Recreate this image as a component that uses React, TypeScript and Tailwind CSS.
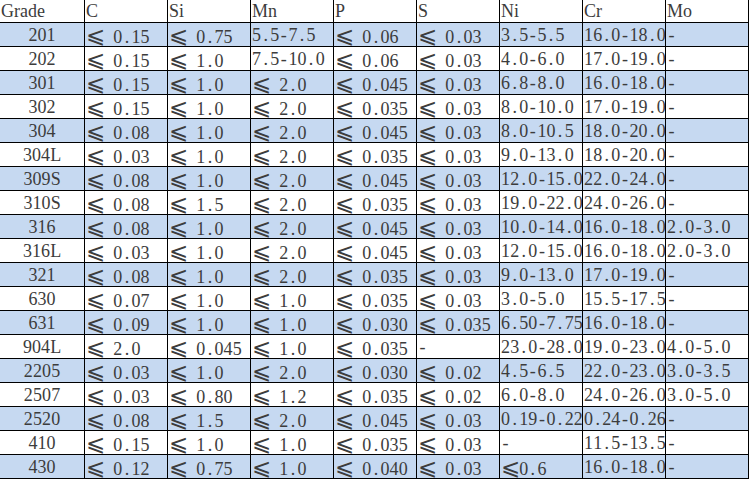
const header = ["Grade", "C", "Si", "Mn", "P", "S", "Ni", "Cr", "Mo"];

const L = "⩽ ";

const rows: string[][] = [
  ["201", L + "0.15", L + "0.75", "5.5-7.5", L + "0.06", L + "0.03", "3.5-5.5", "16.0-18.0", "-"],
  ["202", L + "0.15", L + "1.0", "7.5-10.0", L + "0.06", L + "0.03", "4.0-6.0", "17.0-19.0", "-"],
  ["301", L + "0.15", L + "1.0", L + "2.0", L + "0.045", L + "0.03", "6.8-8.0", "16.0-18.0", "-"],
  ["302", L + "0.15", L + "1.0", L + "2.0", L + "0.035", L + "0.03", "8.0-10.0", "17.0-19.0", "-"],
  ["304", L + "0.08", L + "1.0", L + "2.0", L + "0.045", L + "0.03", "8.0-10.5", "18.0-20.0", "-"],
  ["304L", L + "0.03", L + "1.0", L + "2.0", L + "0.035", L + "0.03", "9.0-13.0", "18.0-20.0", "-"],
  ["309S", L + "0.08", L + "1.0", L + "2.0", L + "0.045", L + "0.03", "12.0-15.0", "22.0-24.0", "-"],
  ["310S", L + "0.08", L + "1.5", L + "2.0", L + "0.035", L + "0.03", "19.0-22.0", "24.0-26.0", "-"],
  ["316", L + "0.08", L + "1.0", L + "2.0", L + "0.045", L + "0.03", "10.0-14.0", "16.0-18.0", "2.0-3.0"],
  ["316L", L + "0.03", L + "1.0", L + "2.0", L + "0.045", L + "0.03", "12.0-15.0", "16.0-18.0", "2.0-3.0"],
  ["321", L + "0.08", L + "1.0", L + "2.0", L + "0.035", L + "0.03", "9.0-13.0", "17.0-19.0", "-"],
  ["630", L + "0.07", L + "1.0", L + "1.0", L + "0.035", L + "0.03", "3.0-5.0", "15.5-17.5", "-"],
  ["631", L + "0.09", L + "1.0", L + "1.0", L + "0.030", L + "0.035", "6.50-7.75", "16.0-18.0", "-"],
  ["904L", L + "2.0", L + "0.045", L + "1.0", L + "0.035", "-", "23.0-28.0", "19.0-23.0", "4.0-5.0"],
  ["2205", L + "0.03", L + "1.0", L + "2.0", L + "0.030", L + "0.02", "4.5-6.5", "22.0-23.0", "3.0-3.5"],
  ["2507", L + "0.03", L + "0.80", L + "1.2", L + "0.035", L + "0.02", "6.0-8.0", "24.0-26.0", "3.0-5.0"],
  ["2520", L + "0.08", L + "1.5", L + "2.0", L + "0.045", L + "0.03", "0.19-0.22", "0.24-0.26", "-"],
  ["410", L + "0.15", L + "1.0", L + "1.0", L + "0.035", L + "0.03", "-", "11.5-13.5", "-"],
  ["430", L + "0.12", L + "0.75", L + "1.0", L + "0.040", L + "0.03", "⩽0.6", "16.0-18.0", "-"],
];

const fixed = "0123456789.- ";

// digits in the sheet sit on a fixed pitch, so each one gets its own cell
function Mono({ text }: { text: string }) {
  return (
    <>
      {text.split("").map((ch, k) =>
        ch === "⩽" ? (
          <span
            key={k}
            className="inline-block w-[18.2px] text-center text-[23px] leading-[20px] font-light"
            style={{ fontFamily: '"DejaVu Sans", sans-serif' }}
          >
            {ch}
          </span>
        ) : fixed.includes(ch) ? (
          <span key={k} className="inline-block w-[9.1px] text-center">
            {ch}
          </span>
        ) : (
          <span key={k}>{ch}</span>
        )
      )}
    </>
  );
}

export default function App() {
  return (
    <div
      className="w-[750px] h-[480px] bg-white overflow-hidden text-[#3c3c3c] text-[18px]"
      style={{ fontFamily: '"Liberation Serif", serif' }}
    >
      <div className="grid grid-cols-[85px_repeat(8,83px)] w-[749px]">
        {header.map((h) => (
          <div
            key={h}
            className="h-[23px] border-r border-b border-black pl-[1px] pt-[1px] leading-[20px] whitespace-pre overflow-hidden"
          >
            <Mono text={h} />
          </div>
        ))}
        {rows.map((r, i) =>
          r.map((c, j) => (
            <div
              key={i + "-" + j}
              className={`h-[24px] border-r border-b border-black pt-[2px] leading-[20px] whitespace-pre overflow-hidden ${
                i % 2 === 0 ? "bg-[#c6d9f1]" : "bg-white"
              } ${j === 0 ? "text-center" : "pl-[1px]"}`}
            >
              <Mono text={c} />
            </div>
          ))
        )}
      </div>
    </div>
  );
}
